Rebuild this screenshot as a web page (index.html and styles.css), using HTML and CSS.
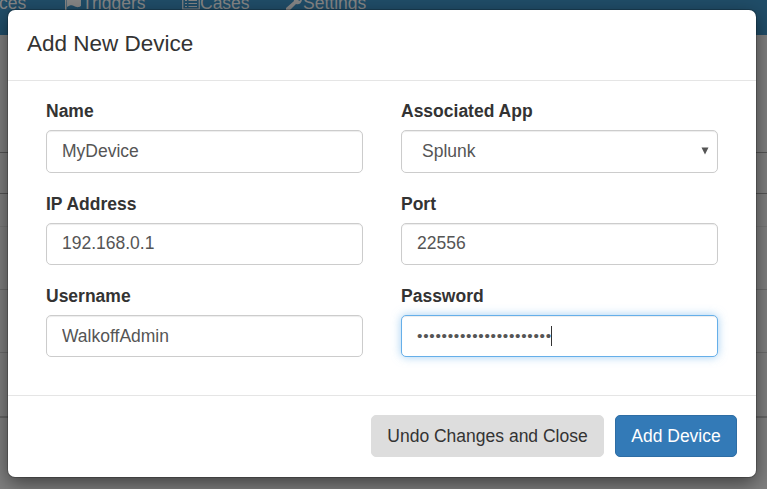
FILE: index.html
```html
<!DOCTYPE html>
<html lang="en">
<head>
<meta charset="utf-8">
<title>Add New Device</title>
<link rel="stylesheet" href="styles.css">
</head>
<body>
<div class="page">
  <nav class="navbar">
    <span class="nav-item nav-devices">ces</span>
    <span class="nav-item nav-triggers"><svg width="18" height="18" viewBox="0 0 18 18"><path d="M1 2h1.500v15H1zM3 4.500C6 2 9 6 12 4.500s3-1 5-1.500v10c-3 2-5 1-7 0s-4-1-7 1z" fill="currentColor"/></svg>Triggers</span>
    <span class="nav-item nav-cases"><svg width="18" height="18" viewBox="0 0 18 18"><path d="M.75 3.500h16.500v12.500H.75zM3 7.500h2m1.500 0H15M3 10.500h2m1.500 0H15M3 13.500h2m1.500 0H15" fill="none" stroke="currentColor" stroke-width="1.200"/></svg>Cases</span>
    <span class="nav-item nav-settings"><svg width="17" height="18" viewBox="0 0 17 18"><path d="M0 15L8 8C7 4 10 1 14 2l-3 3 2 3 3-2c0 4-3 6-6 5l-7 7c-2 1-5-1-3-3z" fill="currentColor"/></svg>Settings</span>
  </nav>
  <div class="table">
    <div class="row toolbar"></div>
    <div class="row heading"></div>
    <div class="row first"></div>
    <div class="row"></div>
    <div class="row"></div>
    <div class="row last"></div>
  </div>
</div>
<div class="modal">
  <header class="modal-header"><h4>Add New Device</h4></header>
  <form class="modal-body">
    <div class="field"><label for="name">Name</label><input class="control tall" id="name" value="MyDevice"></div>
    <div class="field"><label>Associated App</label><div class="control tall select"><span>Splunk</span><svg width="8" height="8" viewBox="0 0 8 8"><path d="M.5.5h7L4 7.500z" fill="#555"/></svg></div></div>
    <div class="field"><label for="ip">IP Address</label><input class="control" id="ip" value="192.168.0.1"></div>
    <div class="field"><label for="port">Port</label><input class="control" id="port" value="22556"></div>
    <div class="field"><label for="user">Username</label><input class="control low" id="user" value="WalkoffAdmin"></div>
    <div class="field"><label>Password</label><div class="control focused"><span class="dots">••••••••••••••••••••••</span><i class="caret"></i></div></div>
  </form>
  <footer class="modal-footer">
    <button class="btn undo">Undo Changes and Close</button>
    <button class="btn primary">Add Device</button>
  </footer>
</div>
</body>
</html>
```
FILE: styles.css
```css
* { box-sizing: border-box; }
body {
  margin: 0;
  width: 767px;
  height: 489px;
  overflow: hidden;
  position: relative;
  background: #7f7f7f;
  color: #333;
  font: 17.5px/25px "Liberation Sans", Arial, sans-serif;
}
.navbar {
  display: flex;
  height: 35px;
  background: #204d68;
  color: #858585;
  line-height: 20px;
  overflow: hidden;
}
.nav-item { display: flex; height: 20px; margin-top: -7px; white-space: nowrap; }
.nav-item svg { flex: none; }
.nav-devices { width: 65px; margin-left: -1px; }
.nav-triggers { width: 118px; }
.nav-cases { width: 104px; }
.row { height: 63px; border-bottom: 1px solid #6c6c6c; }
.row.toolbar { height: 118px; border-color: #555; }
.row.heading { height: 41px; border-color: #555; }
.row.first { height: 33px; border-color: #767676; }
.row.last { height: 65px; border-bottom: 2px solid #666; }
.modal {
  position: absolute;
  left: 8px;
  top: 10px;
  width: 748px;
  height: 467px;
  background: #fff;
  border-radius: 7px;
  box-shadow: 0 0 0 1px rgba(0, 0, 0, .2), 0 6px 19px rgba(0, 0, 0, .5);
}
.modal-header { height: 71px; padding: 19px 19px 0; border-bottom: 1px solid #e5e5e5; }
h4 { margin: 0; font-size: 22.5px; font-weight: 400; line-height: 30px; }
.modal-body {
  display: grid;
  grid-template-columns: 317px 317px;
  grid-template-rows: 93px 92px 92px;
  column-gap: 38px;
  height: 314px;
  padding: 18px 38px 0;
}
.field { display: flex; flex-direction: column; }
label { height: 25px; margin-bottom: 6px; font-weight: 700; }
.control {
  display: flex;
  align-items: center;
  width: 100%;
  height: 42px;
  padding: 0 15px 1px;
  border: 1px solid #ccc;
  border-radius: 5px;
  background: #fff;
  color: #555;
  font: inherit;
  outline: 0;
  box-shadow: inset 0 1px 1px rgba(0, 0, 0, .075);
}
.tall { height: 43px; }
.low { padding: 1px 15px 0; }
.select { justify-content: space-between; padding: 0 8px 1px 20px; }
.focused { border-color: #66afe9; box-shadow: inset 0 1px 1px rgba(0, 0, 0, .075), 0 0 10px rgba(102, 175, 233, .6); }
.dots { font-size: 15.5px; letter-spacing: .7px; }
.caret { width: 1px; height: 20px; margin-left: -1px; background: #333; }
.modal-footer {
  display: flex;
  justify-content: flex-end;
  gap: 11px;
  padding: 19px;
  border-top: 1px solid #e5e5e5;
}
.btn {
  height: 42px;
  padding: 1px 0 0;
  border: 1px solid #ddd;
  border-radius: 5px;
  font: inherit;
  white-space: nowrap;
}
.undo { width: 233px; background: #ddd; color: #333; }
.primary { width: 122px; background: #337ab7; border-color: #2e6da4; color: #fff; }
```
